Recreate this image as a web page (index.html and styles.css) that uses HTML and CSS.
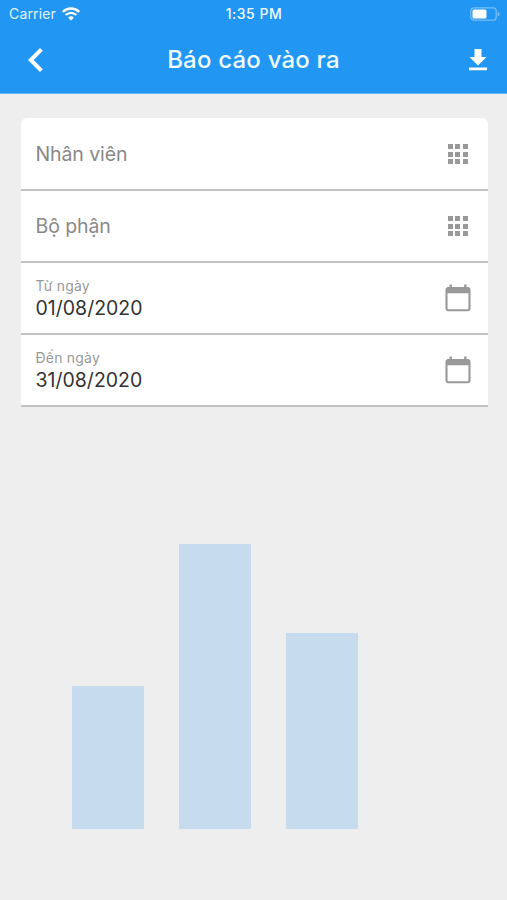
FILE: index.html
```html
<!DOCTYPE html>
<html lang="vi">
<head>
<meta charset="utf-8">
<title>Báo cáo vào ra</title>
<link rel="stylesheet" href="styles.css">
</head>
<body>
<header class="header">
  <div class="status">
    <div class="carrier"><span>Carrier</span>
      <svg width="18" height="14" viewBox="0 0 18 14" fill="none" stroke="#fff" stroke-width="2.3"><path d="M.8 4.9a11.6 11.6 0 0 1 16.4 0M3.7 8a7.5 7.5 0 0 1 10.6 0"/><path d="M9 13.6 6.1 10.7a4.1 4.1 0 0 1 5.8 0z" fill="#fff" stroke="none"/></svg>
    </div>
    <div class="clock">1:35 PM</div>
    <svg class="battery" width="30" height="14" viewBox="0 0 30 14"><rect x=".8" y=".8" width="25.4" height="12.400" rx="3.300" fill="none" stroke="#fff" stroke-opacity=".4" stroke-width="1.2"/><rect x="2.500" y="2.500" width="14" height="9" rx="1.5" fill="#fff"/><path d="M27.700 4.500v5q2-1 2-2.5T27.700 4.500" fill="#fff" fill-opacity=".4"/></svg>
  </div>
  <nav class="nav">
    <svg class="back" width="16" height="24" viewBox="0 0 16 24" fill="none" stroke="#fff" stroke-width="4"><path d="M13.400 1.400 2.800 12l10.600 10.600"/></svg>
    <h1 class="title">Báo cáo vào ra</h1>
    <svg class="download" width="18" height="22" viewBox="0 0 18 22" fill="#fff"><path d="M5.500 0h7v8H17.500L9 16.500.500 8h5zM0 18.600h18v2.600H0z"/></svg>
  </nav>
</header>
<main class="content">
  <form class="filters">
    <div class="field"><span class="placeholder">Nhân viên</span><i class="grid"><b></b><b></b><b></b><b></b><b></b><b></b><b></b><b></b><b></b></i></div>
    <div class="field"><span class="placeholder">Bộ phận</span><i class="grid"><b></b><b></b><b></b><b></b><b></b><b></b><b></b><b></b><b></b></i></div>
    <div class="field"><div class="date"><span class="label">Từ ngày</span><span class="value">01/08/2020</span></div>
      <svg class="calendar" width="26" height="28" viewBox="0 0 26 28"><rect x="1.500" y="4" width="23" height="22.300" rx="2" fill="none" stroke="#999" stroke-width="2.100"/><path d="M2 3.300h22v5.900H2zM4.500.500h2.400v3H4.500zM19.100.500h2.400v3h-2.400z" fill="#999"/></svg></div>
    <div class="field"><div class="date"><span class="label">Đến ngày</span><span class="value">31/08/2020</span></div>
      <svg class="calendar" width="26" height="28" viewBox="0 0 26 28"><rect x="1.500" y="4" width="23" height="22.300" rx="2" fill="none" stroke="#999" stroke-width="2.100"/><path d="M2 3.300h22v5.900H2zM4.500.500h2.400v3H4.500zM19.100.500h2.400v3h-2.400z" fill="#999"/></svg></div>
  </form>
  <section class="chart">
    <div class="bar low"></div><div class="bar high"></div><div class="bar mid"></div>
  </section>
</main>
</body>
</html>
```
FILE: styles.css
```css
* { box-sizing: border-box; }
body {
  margin: 0;
  height: 900px;
  display: flex;
  flex-direction: column;
  background: #eee;
  font-family: Inter, "Noto Sans", sans-serif;
  overflow: hidden;
}
svg { display: block; flex: none; }
.header { height: 94px; background: #2196f3; color: #fff; border-bottom: 1px solid #64b3f2; }
.status {
  height: 27px;
  display: grid;
  grid-template-columns: 1fr auto 1fr;
  align-items: center;
  padding: 0 7px 0 9px;
}
.carrier { display: flex; align-items: center; gap: 6px; font-size: 14px; letter-spacing: .15px; color: #e1f4ff; }
.clock { font-size: 14px; font-weight: 500; letter-spacing: .5px; color: #f4fbff; margin-left: -1px; }
.battery { justify-self: end; }
.nav { height: 66px; display: grid; grid-template-columns: 1fr auto 1fr; align-items: center; padding: 0 20px 0 28px; }
.download { justify-self: end; }
.title { margin: 0 8px 0 0; font-size: 24px; font-weight: 500; line-height: 30px; letter-spacing: .2px; color: #effbff; }
.content { flex: 1; display: flex; flex-direction: column; justify-content: space-between; padding: 24px 19.5px 71px 20.5px; }
.filters { background: #fff; border-radius: 6px 6px 0 0; }
.field {
  height: 72px;
  display: flex;
  align-items: center;
  justify-content: space-between;
  padding: 0 20px 0 15px;
  border-bottom: 2px solid #c3c3c3;
}
.field:first-child { height: 73px; padding-top: 1px; }
.placeholder { font-size: 19.5px; letter-spacing: -.1px; color: #888; }
.grid { display: grid; grid-template-columns: repeat(3, 5px); gap: 2.3px; }
.grid b { height: 5px; background: #999; }
.field .calendar { margin-right: -3px; }
.date { display: flex; flex-direction: column; }
.label { font-size: 14px; line-height: 20px; letter-spacing: .2px; color: #999; }
.value { font-size: 19.5px; line-height: 25px; color: #333; }
.chart { display: flex; align-items: flex-end; gap: 35px; padding-left: 51.5px; }
.bar { width: 72px; background: #c6dbee; }
.low { height: 143px; }
.high { height: 285.5px; }
.mid { height: 196px; }
```
